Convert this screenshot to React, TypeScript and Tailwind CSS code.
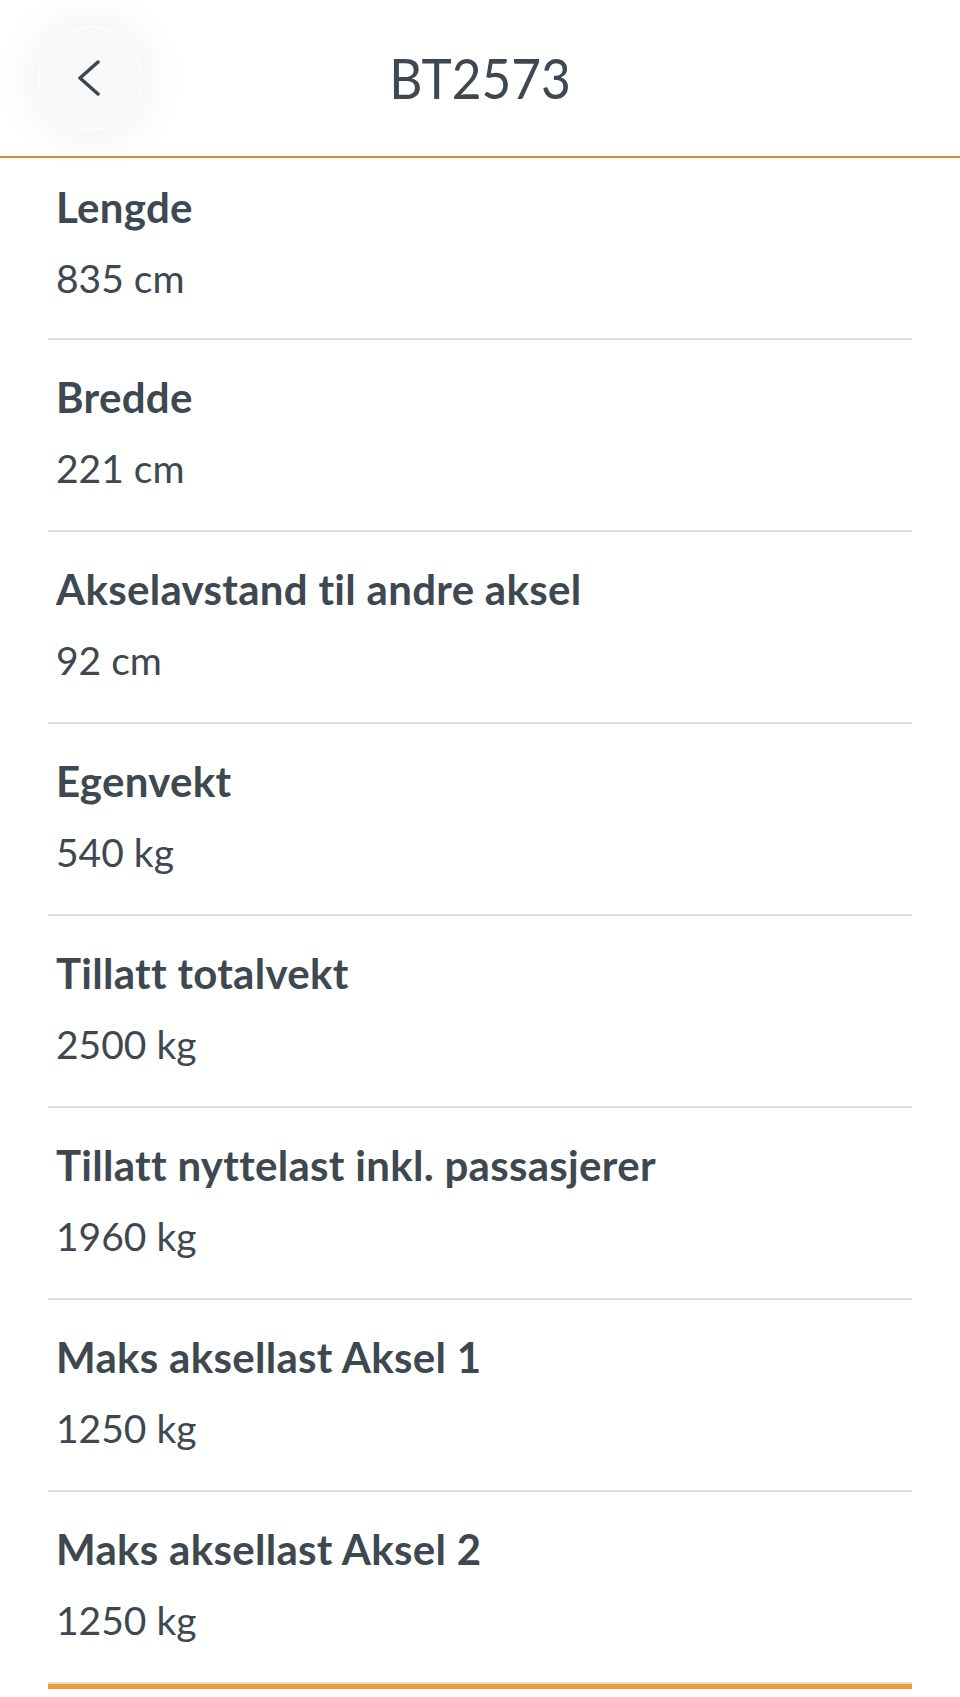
import React from "react"

const rows = [
  { label: "Lengde", value: "835 cm" },
  { label: "Bredde", value: "221 cm" },
  { label: "Akselavstand til andre aksel", value: "92 cm" },
  { label: "Egenvekt", value: "540 kg" },
  { label: "Tillatt totalvekt", value: "2500 kg" },
  { label: "Tillatt nyttelast inkl. passasjerer", value: "1960 kg" },
  { label: "Maks aksellast Aksel 1", value: "1250 kg" },
  { label: "Maks aksellast Aksel 2", value: "1250 kg" },
]

function BackButton() {
  return (
    <button className="w-[105px] h-[105px] rounded-full bg-[#f8f8f8] border border-white shadow-[0_0_50px_rgba(0,0,0,0.09)] flex items-center justify-center">
      <svg width="24" height="36" viewBox="0 0 24 36" fill="none" className="mr-[4px]">
        <path d="M21 2 L3 18 L21 34" stroke="#3e474e" strokeWidth="3.5" strokeLinecap="round" strokeLinejoin="round" />
      </svg>
    </button>
  )
}

export default function App() {
  return (
    <div className="w-[960px] h-[1697px] bg-white overflow-hidden text-[#3e4850]" style={{ fontFamily: "Lato, 'Noto Sans', sans-serif" }}>
      <header className="relative z-10 h-[158px] bg-white border-b-2 border-[#d98b3c] flex items-center px-[38px]">
        <BackButton />
        <h1 className="absolute left-0 right-0 top-[45px] text-center text-[57px] leading-[64px] font-normal scale-x-[0.9]">BT2573</h1>
      </header>

      <div className="px-[48px]">
        {rows.map((r, i) => (
          <div
            key={i}
            className={
              "px-[8px] border-b-2 border-[#dcdcdc] " +
              (i === 0 ? "pt-[25px] pb-[36px]" : "pt-[33px] pb-[38px]")
            }
          >
            <div className="text-[42px] leading-[48px] font-bold tracking-[0.3px]">{r.label}</div>
            <div className="mt-[23px] text-[39px] leading-[48px]">{r.value}</div>
          </div>
        ))}
        <div className="h-[5px] bg-[#f09a35]" />
      </div>
    </div>
  )
}
